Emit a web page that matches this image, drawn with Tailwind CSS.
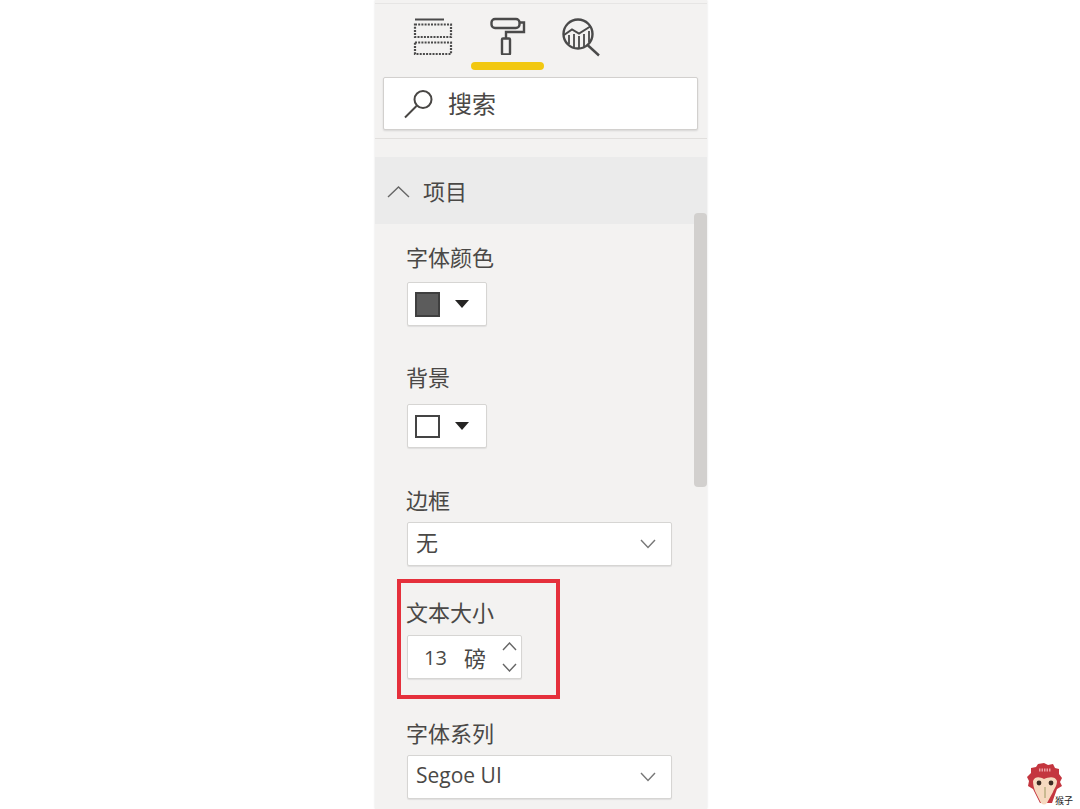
<!DOCTYPE html>
<html lang="zh">
<head>
<meta charset="utf-8">
<script src="https://cdn.jsdelivr.net/npm/@tailwindcss/browser@4"></script>
<title>格式窗格</title>
</head>
<body class="bg-white">
<div class="relative w-[1080px] h-[809px] overflow-hidden bg-white text-[#4a4846] font-['Open_Sans','Noto_Sans_CJK_SC',sans-serif]">
  <div class="relative ml-[375px] w-[332px] h-[809px] overflow-hidden bg-[#f3f2f1] flex flex-col shadow-[0_0_2px_rgba(0,0,0,0.12)]">
    <div class="h-[4px] border-b border-[#e6e5e4] shrink-0"></div>

    <div class="relative shrink-0 h-[66px]">
      <svg width="40" height="38" viewBox="0 0 40 38" fill="none" stroke="#4a4a4a" class="absolute left-[38px] top-[13px]">
        <path d="M2 2.5H31" stroke-width="2"/>
        <rect x="2" y="7.5" width="36" height="12.5" stroke-width="2.2" stroke-dasharray="2 1.2"/>
        <path d="M2 14H38" stroke-width="0" />
        <rect x="2" y="25.5" width="36" height="11.5" stroke-width="2.2" stroke-dasharray="2 1.2"/>
      </svg>
      <div class="absolute left-[96px] top-[13px] w-[73px] flex flex-col items-center">
        <svg width="36" height="38" viewBox="0 0 36 38" fill="none" stroke="#4a4a4a" stroke-width="2.4">
          <rect x="1.5" y="2" width="28" height="9" rx="3.5"/>
          <path d="M29.5 5.5H34V15H16V21"/>
          <rect x="12" y="21.5" width="8" height="16" rx="1"/>
        </svg>
        <div class="w-[73px] h-[8px] mt-[7px] rounded-full bg-[#f2c811]"></div>
      </div>
      <svg width="40" height="40" viewBox="0 0 40 40" fill="none" stroke="#4a4a4a" stroke-width="2.4" class="absolute left-[186px] top-[13px]">
        <circle cx="17" cy="17" r="14.5"/>
        <path d="M26.5 28L38 38.5"/>
        <path d="M3 18L11 12.5L18 16.5L30 9" stroke-width="2"/>
        <path d="M8 18V27M13 17V30M18 19V31M23 17V30M28 14V25" stroke-width="1.8"/>
      </svg>
    </div>

    <div class="shrink-0 mx-[8px] mt-[7px] h-[53px] w-[315px] bg-white rounded-[2px] border border-[#d2d0ce] shadow-[0_1px_2px_rgba(0,0,0,0.12)] flex items-center pl-[19px]">
      <svg width="31" height="30" viewBox="0 0 31 30" fill="none" stroke="#484644" stroke-width="2">
        <circle cx="20" cy="10.5" r="8.5"/>
        <path d="M13.5 17L2 28.5"/>
      </svg>
      <span class="ml-[14px] text-[24px] leading-[30px]">搜索</span>
    </div>

    <div class="shrink-0 h-[19px] mt-[8px] border-t border-[#e1dfdd]"></div>

    <div class="shrink-0 h-[67px] bg-[#ebebeb] flex items-center pl-[12px]">
      <svg width="23" height="14" viewBox="0 0 23 14" fill="none" stroke="#666" stroke-width="1.4">
        <path d="M1 13L11.5 3L22 13"/>
      </svg>
      <span class="ml-[13px] text-[22px] leading-[26px]">项目</span>
    </div>

    <div class="pl-[32px] flex flex-col items-start">
      <div class="-ml-[1px] mt-[21px] h-[26px] text-[22px] leading-[24px]">字体颜色</div>
      <div class="mt-[11px] w-[80px] h-[44px] bg-white rounded-[2px] border border-[#d6d5d3] shadow-[0_1px_1px_rgba(0,0,0,0.08)] flex items-center pl-[7px]">
        <div class="w-[25px] h-[25px] bg-[#5c5c5c] border-2 border-[#3f3f3f]"></div>
        <svg width="14" height="8" viewBox="0 0 14 8" class="ml-[15px]"><path d="M0 0H14L7 8Z" fill="#252423"/></svg>
      </div>

      <div class="-ml-[1px] mt-[39px] h-[26px] text-[22px] leading-[24px]">背景</div>
      <div class="mt-[13px] w-[80px] h-[44px] bg-white rounded-[2px] border border-[#d6d5d3] shadow-[0_1px_1px_rgba(0,0,0,0.08)] flex items-center pl-[7px]">
        <div class="w-[25px] h-[23px] bg-white border-2 border-[#444]"></div>
        <svg width="14" height="8" viewBox="0 0 14 8" class="ml-[15px]"><path d="M0 0H14L7 8Z" fill="#252423"/></svg>
      </div>

      <div class="-ml-[1px] mt-[40px] h-[26px] text-[22px] leading-[24px]">边框</div>
      <div class="mt-[8px] w-[265px] h-[44px] bg-white rounded-[2px] border border-[#d6d5d3] shadow-[0_1px_1px_rgba(0,0,0,0.08)] flex items-center justify-between pl-[8px] pr-[15px]">
        <span class="text-[22px] leading-[28px] -mt-[5px]">无</span>
        <svg width="16" height="10" viewBox="0 0 16 10" fill="none" stroke="#777" stroke-width="1.4"><path d="M1 1L8 8.5L15 1"/></svg>
      </div>

      <div class="-ml-[1px] mt-[33px] h-[26px] text-[22px] leading-[26px]">文本大小</div>
      <div class="mt-[10px] w-[115px] h-[44px] bg-white rounded-[2px] border border-[#d6d5d3] shadow-[0_1px_1px_rgba(0,0,0,0.08)] flex items-center pl-[16px]">
        <span class="text-[20px] leading-[28px] w-[40px] mt-[2px]">13</span>
        <span class="text-[22px] leading-[28px] w-[24px] mt-[2px]">磅</span>
        <div class="ml-[14px] flex flex-col gap-[12px]">
          <svg width="15" height="9" viewBox="0 0 15 9" fill="none" stroke="#666" stroke-width="1.4"><path d="M1 8L7.5 1L14 8"/></svg>
          <svg width="15" height="9" viewBox="0 0 15 9" fill="none" stroke="#666" stroke-width="1.4"><path d="M1 1L7.5 8L14 1"/></svg>
        </div>
      </div>

      <div class="-ml-[1px] mt-[42px] h-[26px] text-[22px] leading-[24px]">字体系列</div>
      <div class="mt-[8px] w-[265px] h-[44px] bg-white rounded-[2px] border border-[#d6d5d3] shadow-[0_1px_1px_rgba(0,0,0,0.08)] flex items-center justify-between pl-[8px] pr-[15px]">
        <span class="text-[21px] leading-[28px] -mt-[4px]">Segoe UI</span>
        <svg width="16" height="10" viewBox="0 0 16 10" fill="none" stroke="#777" stroke-width="1.4"><path d="M1 1L8 8.5L15 1"/></svg>
      </div>
    </div>

    <div class="absolute left-[319px] top-[213px] w-[13px] h-[274px] rounded-[4px] bg-[#d2d0ce]"></div>
  </div>

  <div class="absolute left-[397px] top-[579px] w-[163px] h-[120px] border-[4px] border-[#e5303c]"></div>

  <div class="absolute left-[1026px] top-[762px] w-[54px] h-[47px]">
    <svg width="38" height="44" viewBox="0 0 38 44">
      <path d="M18 1L22 3L27 2L29 6L33 7L33 12L36 16L34 20L36 24L31 27L26 41H14L7 27L2 24L3 19L1 15L5 11L5 6L10 5L12 2Z" fill="#c4363f"/>
      <path d="M7 19C9 14 14 15 18 17C23 15 29 14 31 19C31 24 28 27 27 30L21 41C19 43 17 43 15 41L9 29C8 26 7 23 7 19Z" fill="#f6d9c0"/>
      <circle cx="13" cy="21" r="2.4" fill="#3a2b22"/>
      <circle cx="25" cy="21" r="2.4" fill="#3a2b22"/>
      <path d="M19 25V36" stroke="#9c9a62" stroke-width="1" fill="none"/>
      <path d="M13 8H25" stroke="#eda0a5" stroke-width="3" stroke-dasharray="1.5 1"/>
    </svg>
    <span class="absolute left-[29px] top-[33px] text-[9px] leading-[12px] text-[#222]">猴子</span>
  </div>
</div>
</body>
</html>
